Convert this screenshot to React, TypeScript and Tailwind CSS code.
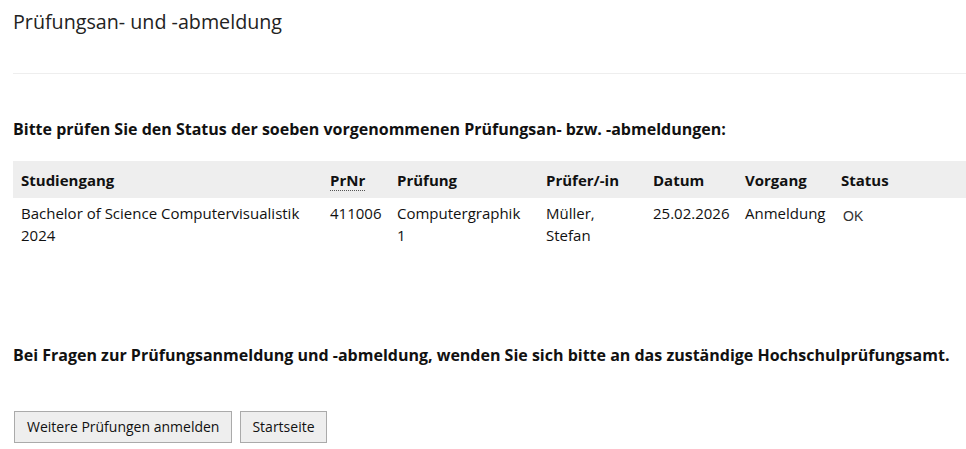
import React from "react";

const cols = [309, 67, 149, 107, 92, 96, 133];

export default function App() {
  return (
    <div className="bg-white w-[966px] h-[449px] overflow-hidden text-[#111] font-['Open_Sans',sans-serif]">
      <div className="pl-[13px]">
        <h1 className="text-[19.7px] leading-[28px] pt-[8px] text-[#222] font-normal">Prüfungsan- und -abmeldung</h1>
        <div className="mt-[37px] h-px bg-[#eeeeee]" />
        <p className="mt-[43px] text-[16px] leading-[24px] font-bold text-[#111]">
          Bitte prüfen Sie den Status der soeben vorgenommenen Prüfungsan- bzw. -abmeldungen:
        </p>
        <table className="mt-[20px] border-collapse text-[15px] leading-[22.5px] table-fixed w-[953px]">
          <colgroup>
            {cols.map((w, i) => (
              <col key={i} style={{ width: w }} />
            ))}
          </colgroup>
          <thead>
            <tr className="bg-[#eeeeee]">
              <th className="text-left font-bold px-2 pt-[8px] pb-[6px]">Studiengang</th>
              <th className="text-left font-bold px-2 pt-[8px] pb-[6px]">
                <abbr className="no-underline border-b border-dotted border-[#555]" title="Prüfungsnummer">PrNr</abbr>
              </th>
              <th className="text-left font-bold px-2 pt-[8px] pb-[6px]">Prüfung</th>
              <th className="text-left font-bold px-2 pt-[8px] pb-[6px]">Prüfer/-in</th>
              <th className="text-left font-bold px-2 pt-[8px] pb-[6px]">Datum</th>
              <th className="text-left font-bold px-2 pt-[8px] pb-[6px]">Vorgang</th>
              <th className="text-left font-bold px-2 pt-[8px] pb-[6px]">Status</th>
            </tr>
          </thead>
          <tbody>
            <tr className="align-top">
              <td className="px-2 pt-[4px]">Bachelor of Science Computervisualistik 2024</td>
              <td className="px-2 pt-[4px]">411006</td>
              <td className="px-2 pt-[4px]">Computergraphik 1</td>
              <td className="px-2 pt-[4px]">Müller, Stefan</td>
              <td className="px-2 pt-[4px] whitespace-nowrap">25.02.2026</td>
              <td className="px-2 pt-[4px] whitespace-nowrap">Anmeldung</td>
              <td className="pl-[10px] pt-[6px]">
                <span className="text-[14px] text-[#333] font-['Liberation_Sans',sans-serif]">OK</span>
              </td>
            </tr>
          </tbody>
        </table>
        <p className="mt-[96px] text-[16px] leading-[24px] font-bold text-[#111]">
          Bei Fragen zur Prüfungsanmeldung und -abmeldung, wenden Sie sich bitte an das zuständige Hochschulprüfungsamt.
        </p>
        <div className="mt-[44px] ml-px flex gap-[8px]">
          <button className="h-[32px] px-[12px] border border-[#aaa] bg-[#eeeeee] text-[14px] text-[#111]">Weitere Prüfungen anmelden</button>
          <button className="h-[32px] px-[11px] border border-[#aaa] bg-[#eeeeee] text-[14px] text-[#111]">Startseite</button>
        </div>
      </div>
    </div>
  );
}
